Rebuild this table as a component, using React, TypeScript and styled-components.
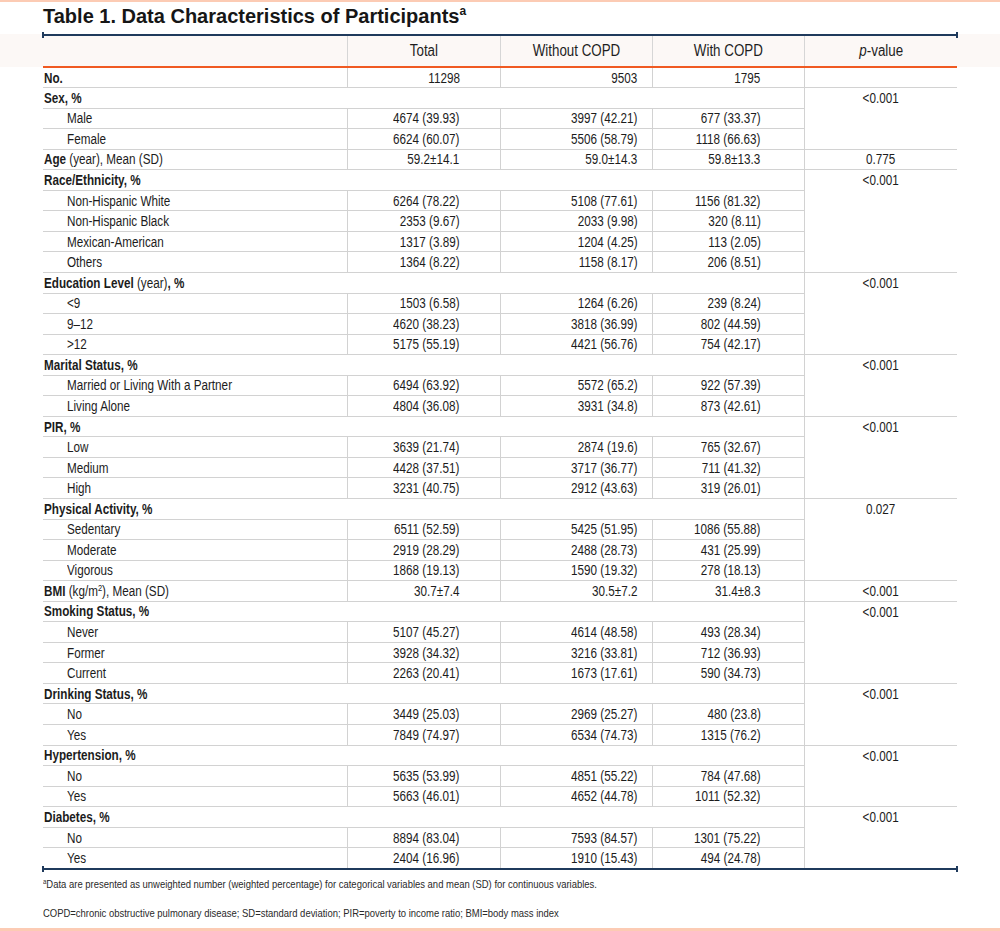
import React from "react";
import styled, { createGlobalStyle } from "styled-components";

const GlobalStyle = createGlobalStyle`
  html, body { margin: 0; padding: 0; background: #ffffff; }
  * { box-sizing: border-box; }
`;

const BASE = `"Liberation Sans", Arial, sans-serif`;

const Page = styled.div`
  width: 1000px;
  height: 931px;
  border-top: 2px solid #fccbb4;
  border-bottom: 3px solid #fccbb4;
  background: linear-gradient(
    to bottom,
    #ffffff 0 32px,
    #fcf8f6 32px 65px,
    #ffffff 65px
  );
  display: flex;
  flex-direction: column;
  color: #1c1c1c;
`;

const Title = styled.h1`
  margin: 0;
  height: 32px;
  padding: 3px 0 0 43px;
  font-family: ${BASE};
  font-weight: 700;
  font-size: 20px;
  line-height: 22px;
  color: #161616;
  sup {
    font-size: 12px;
    line-height: 0;
    vertical-align: 8px;
  }
`;

/* Arial-Narrow-like horizontal compression of a text run */
const Squeeze = styled.span<{ $origin: "left" | "right" | "center"; $k?: number }>`
  display: inline-block;
  white-space: nowrap;
  transform: scaleX(${(p) => p.$k ?? 0.835});
  transform-origin: ${(p) => p.$origin} center;
`;

const TableBlock = styled.div`
  margin-left: 42px;
  width: 916px;
  display: flex;
  flex-direction: column;
`;

const Rule = styled.div`
  position: relative;
  height: 2px;
  background: #1f3a5c;
  &::before,
  &::after {
    content: "";
    position: absolute;
    top: -2px;
    width: 2px;
    height: 6px;
    background: #1f3a5c;
  }
  &::before { left: 0; }
  &::after { right: 0; }
`;

const Table = styled.table`
  margin-left: 1px;
  width: 914px;
  border-collapse: collapse;
  table-layout: fixed;
  font-family: ${BASE};
  font-size: 14px;
`;

const HeadCell = styled.th`
  height: 31px;
  padding: 0;
  font-weight: 400;
  font-size: 16px;
  text-align: center;
  color: #1e1e1e;
  border-bottom: 2px solid #f05a22;
  border-left: 1px solid #d6d6d6;
  &:first-child { border-left: none; }
  i { font-style: italic; }
`;

const Row = styled.tr`
  height: 20.56px;
`;

const LabelCell = styled.td<{ $sub?: boolean }>`
  padding: 0 0 0 ${(p) => (p.$sub ? "24px" : "1px")};
  text-align: left;
  white-space: nowrap;
  line-height: 16px;
  border-top: 1px solid #d2d2d2;
  border-right: 1px solid #d2d2d2;
  b { font-weight: 700; }
  sup { font-size: 9px; line-height: 0; vertical-align: 5px; }
`;

const GroupCell = styled.td`
  padding: 0 0 0 1px;
  text-align: left;
  white-space: nowrap;
  line-height: 16px;
  font-weight: 700;
  border-top: 1px solid #d2d2d2;
  border-right: 1px solid #d2d2d2;
  span.normal { font-weight: 400; }
`;

const ValueCell = styled.td<{ $pad: number }>`
  padding: 0 ${(p) => p.$pad}px 0 0;
  text-align: right;
  white-space: nowrap;
  line-height: 16px;
  border-top: 1px solid #d2d2d2;
  border-right: 1px solid #d2d2d2;
`;

const PCell = styled.td<{ $top?: boolean }>`
  padding: ${(p) => (p.$top ? "2px 0 0 0" : "0")};
  vertical-align: ${(p) => (p.$top ? "top" : "middle")};
  text-align: center;
  white-space: nowrap;
  line-height: 16px;
  border-top: 1px solid #d2d2d2;
`;

const Notes = styled.div`
  margin: 7px 0 0 43px;
  font-family: ${BASE};
  font-size: 11px;
  line-height: 14px;
  color: #2a2a2a;
  display: flex;
  flex-direction: column;
  gap: 15px;
  sup { font-size: 7px; line-height: 0; vertical-align: 4px; }
`;

type Vals = [string, string, string];
type Single = { kind: "single"; label: React.ReactNode; v: Vals; p: string };
type Group = {
  kind: "group";
  label: React.ReactNode;
  p: string;
  items: { label: React.ReactNode; v: Vals }[];
};
type Entry = Single | Group;

const data: Entry[] = [
  { kind: "single", label: <b>No.</b>, v: ["11298", "9503", "1795"], p: "" },
  {
    kind: "group",
    label: "Sex, %",
    p: "<0.001",
    items: [
      { label: "Male", v: ["4674 (39.93)", "3997 (42.21)", "677 (33.37)"] },
      { label: "Female", v: ["6624 (60.07)", "5506 (58.79)", "1118 (66.63)"] },
    ],
  },
  {
    kind: "single",
    label: (
      <>
        <b>Age</b> (year), Mean (SD)
      </>
    ),
    v: ["59.2±14.1", "59.0±14.3", "59.8±13.3"],
    p: "0.775",
  },
  {
    kind: "group",
    label: "Race/Ethnicity, %",
    p: "<0.001",
    items: [
      { label: "Non-Hispanic White", v: ["6264 (78.22)", "5108 (77.61)", "1156 (81.32)"] },
      { label: "Non-Hispanic Black", v: ["2353 (9.67)", "2033 (9.98)", "320 (8.11)"] },
      { label: "Mexican-American", v: ["1317 (3.89)", "1204 (4.25)", "113 (2.05)"] },
      { label: "Others", v: ["1364 (8.22)", "1158 (8.17)", "206 (8.51)"] },
    ],
  },
  {
    kind: "group",
    label: (
      <>
        Education Level <span className="normal">(year)</span>, %
      </>
    ),
    p: "<0.001",
    items: [
      { label: "<9", v: ["1503 (6.58)", "1264 (6.26)", "239 (8.24)"] },
      { label: "9–12", v: ["4620 (38.23)", "3818 (36.99)", "802 (44.59)"] },
      { label: ">12", v: ["5175 (55.19)", "4421 (56.76)", "754 (42.17)"] },
    ],
  },
  {
    kind: "group",
    label: "Marital Status, %",
    p: "<0.001",
    items: [
      { label: "Married or Living With a Partner", v: ["6494 (63.92)", "5572 (65.2)", "922 (57.39)"] },
      { label: "Living Alone", v: ["4804 (36.08)", "3931 (34.8)", "873 (42.61)"] },
    ],
  },
  {
    kind: "group",
    label: "PIR, %",
    p: "<0.001",
    items: [
      { label: "Low", v: ["3639 (21.74)", "2874 (19.6)", "765 (32.67)"] },
      { label: "Medium", v: ["4428 (37.51)", "3717 (36.77)", "711 (41.32)"] },
      { label: "High", v: ["3231 (40.75)", "2912 (43.63)", "319 (26.01)"] },
    ],
  },
  {
    kind: "group",
    label: "Physical Activity, %",
    p: "0.027",
    items: [
      { label: "Sedentary", v: ["6511 (52.59)", "5425 (51.95)", "1086 (55.88)"] },
      { label: "Moderate", v: ["2919 (28.29)", "2488 (28.73)", "431 (25.99)"] },
      { label: "Vigorous", v: ["1868 (19.13)", "1590 (19.32)", "278 (18.13)"] },
    ],
  },
  {
    kind: "single",
    label: (
      <>
        <b>BMI</b> (kg/m<sup>2</sup>), Mean (SD)
      </>
    ),
    v: ["30.7±7.4", "30.5±7.2", "31.4±8.3"],
    p: "<0.001",
  },
  {
    kind: "group",
    label: "Smoking Status, %",
    p: "<0.001",
    items: [
      { label: "Never", v: ["5107 (45.27)", "4614 (48.58)", "493 (28.34)"] },
      { label: "Former", v: ["3928 (34.32)", "3216 (33.81)", "712 (36.93)"] },
      { label: "Current", v: ["2263 (20.41)", "1673 (17.61)", "590 (34.73)"] },
    ],
  },
  {
    kind: "group",
    label: "Drinking Status, %",
    p: "<0.001",
    items: [
      { label: "No", v: ["3449 (25.03)", "2969 (25.27)", "480 (23.8)"] },
      { label: "Yes", v: ["7849 (74.97)", "6534 (74.73)", "1315 (76.2)"] },
    ],
  },
  {
    kind: "group",
    label: "Hypertension, %",
    p: "<0.001",
    items: [
      { label: "No", v: ["5635 (53.99)", "4851 (55.22)", "784 (47.68)"] },
      { label: "Yes", v: ["5663 (46.01)", "4652 (44.78)", "1011 (52.32)"] },
    ],
  },
  {
    kind: "group",
    label: "Diabetes, %",
    p: "<0.001",
    items: [
      { label: "No", v: ["8894 (83.04)", "7593 (84.57)", "1301 (75.22)"] },
      { label: "Yes", v: ["2404 (16.96)", "1910 (15.43)", "494 (24.78)"] },
    ],
  },
];

const PADS = [40, 14, 43];

function Values({ v }: { v: Vals }) {
  return (
    <>
      {v.map((x, i) => (
        <ValueCell key={i} $pad={PADS[i]}>
          <Squeeze $origin="right">{x}</Squeeze>
        </ValueCell>
      ))}
    </>
  );
}

export default function App() {
  const rows: React.ReactNode[] = [];
  data.forEach((e, idx) => {
    if (e.kind === "single") {
      rows.push(
        <Row key={`s${idx}`}>
          <LabelCell>
            <Squeeze $origin="left">{e.label}</Squeeze>
          </LabelCell>
          <Values v={e.v} />
          <PCell>
            <Squeeze $origin="center">{e.p}</Squeeze>
          </PCell>
        </Row>
      );
    } else {
      rows.push(
        <Row key={`g${idx}`}>
          <GroupCell colSpan={4}>
            <Squeeze $origin="left">{e.label}</Squeeze>
          </GroupCell>
          <PCell $top rowSpan={e.items.length + 1}>
            <Squeeze $origin="center">{e.p}</Squeeze>
          </PCell>
        </Row>
      );
      e.items.forEach((it, j) => {
        rows.push(
          <Row key={`g${idx}-${j}`}>
            <LabelCell $sub>
              <Squeeze $origin="left">{it.label}</Squeeze>
            </LabelCell>
            <Values v={it.v} />
          </Row>
        );
      });
    }
  });

  return (
    <>
      <GlobalStyle />
      <Page>
        <Title>
          Table 1. Data Characteristics of Participants<sup>a</sup>
        </Title>
        <TableBlock>
          <Rule />
          <Table>
            <colgroup>
              <col style={{ width: 304 }} />
              <col style={{ width: 153 }} />
              <col style={{ width: 152 }} />
              <col style={{ width: 152 }} />
              <col style={{ width: 153 }} />
            </colgroup>
            <thead>
              <tr>
                <HeadCell />
                <HeadCell>
                  <Squeeze $origin="center">Total</Squeeze>
                </HeadCell>
                <HeadCell>
                  <Squeeze $origin="center">Without COPD</Squeeze>
                </HeadCell>
                <HeadCell>
                  <Squeeze $origin="center">With COPD</Squeeze>
                </HeadCell>
                <HeadCell>
                  <Squeeze $origin="center">
                    <i>p</i>-value
                  </Squeeze>
                </HeadCell>
              </tr>
            </thead>
            <tbody>{rows}</tbody>
          </Table>
          <Rule />
        </TableBlock>
        <Notes>
          <div>
            <Squeeze $origin="left" $k={0.86}>
              <sup>a</sup>Data are presented as unweighted number (weighted percentage) for
              categorical variables and mean (SD) for continuous variables.
            </Squeeze>
          </div>
          <div>
            <Squeeze $origin="left" $k={0.86}>
              COPD=chronic obstructive pulmonary disease; SD=standard deviation; PIR=poverty to
              income ratio; BMI=body mass index
            </Squeeze>
          </div>
        </Notes>
      </Page>
    </>
  );
}
